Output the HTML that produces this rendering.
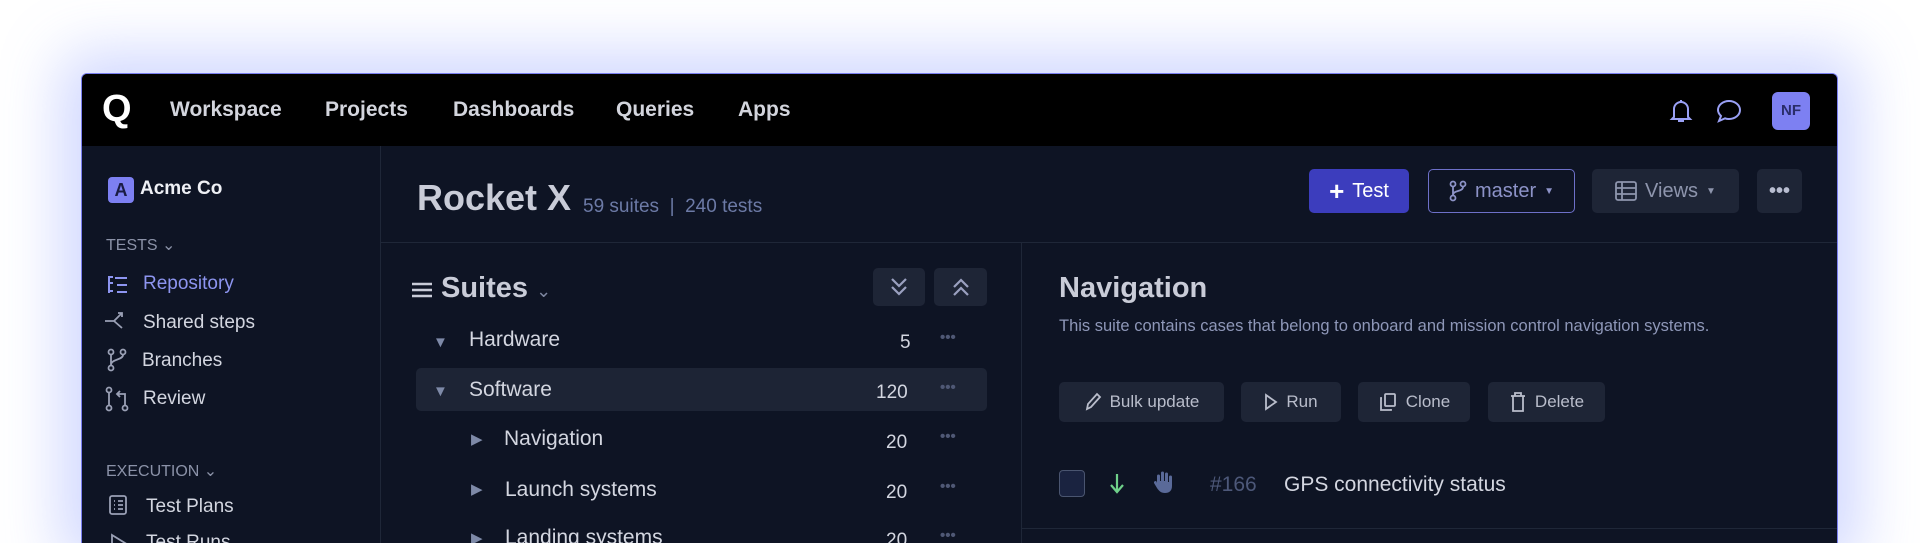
<!DOCTYPE html>
<html><head><meta charset="utf-8"><style>
*{box-sizing:border-box;margin:0;padding:0}
html{width:1920px;height:543px;overflow:hidden}
body{width:1920px;height:543px;overflow:hidden;background:#fff;font-family:"Liberation Sans",sans-serif;position:relative}
.win{position:absolute;left:81px;top:73px;width:1757px;height:470px;background:#0e1424;border:1.5px solid #7a7ff0;border-bottom:none;border-radius:6px 6px 0 0;overflow:hidden;box-shadow:0 0 60px 20px rgba(120,140,255,.35)}
.a{position:absolute;white-space:nowrap}
.nav{position:absolute;left:0;top:0;right:0;height:72px;background:#000}
.nav .a{color:#d3d5dd;font-size:21px;font-weight:bold;top:24px}
.side .a{color:#d3d6e0;font-size:19px}
.sec{color:#8b92a8 !important;font-size:16px !important}
.line{position:absolute;background:#1f2738}
.btn{position:absolute;border-radius:5px;background:#1e2536;color:#b9bdcb;font-size:17px;display:flex;align-items:center;justify-content:center;gap:8px}
.row .a{color:#d3d6e0;font-size:21px}
.row .cnt{color:#d3d6e0;font-size:19px}
.row .dots{color:#4f5875;font-size:15px;font-weight:bold}
.row .tri{color:#7e8aa8;font-size:15px}
svg{display:block}
</style></head><body>
<div class="win">
 <div class="nav">
  <div class="a" style="left:20px;top:14px;font-size:38px;font-weight:900;color:#fff">Q</div>
  <div class="a" style="left:88px">Workspace</div>
  <div class="a" style="left:243px">Projects</div>
  <div class="a" style="left:371px">Dashboards</div>
  <div class="a" style="left:534px">Queries</div>
  <div class="a" style="left:656px">Apps</div>
  <svg class="a" style="left:1587px;top:24px" width="24" height="26" viewBox="0 0 24 26" fill="none" stroke="#9aa0f5" stroke-width="2"><path d="M5 19V11a7 7 0 0 1 14 0v8l2 2H3z"/><path d="M12 2v2M9 23h6"/></svg>
  <svg class="a" style="left:1634px;top:25px" width="26" height="24" viewBox="0 0 26 24" fill="none" stroke="#9aa0f5" stroke-width="2"><path d="M13 2c6 0 11 4 11 9s-5 9-11 9c-2 0-3-.3-4-.7L3 22l2-5c-2-2-3-4-3-6 0-5 5-9 11-9z"/></svg>
  <div class="a" style="left:1690px;top:18px;width:38px;height:38px;background:#7d80f2;border-radius:6px;color:#2a2d6a;font-size:15px;font-weight:bold;text-align:center;line-height:38px">NF</div>
 </div>
 <div class="line" style="left:298px;top:72px;width:1px;height:460px"></div>
 <div class="side">
  <div class="a" style="left:26px;top:103px;width:26px;height:26px;background:#7d80f2;border-radius:4px;color:#1a1c44;font-size:18px;font-weight:bold;text-align:center;line-height:26px">A</div>
  <div class="a" style="left:58px;top:104px;font-weight:bold;font-size:19px;color:#eef0f5">Acme Co</div>
  <div class="a sec" style="left:24px;top:161px">TESTS &#8964;</div>
  <svg class="a" style="left:24px;top:200px" width="24" height="22" viewBox="0 0 24 22" fill="none" stroke="#8d95f0" stroke-width="2"><path d="M3 2v17M3 9h4M3 17h4M9 4h12M11 11h10M11 18h10M3 3h4"/></svg>
  <div class="a" style="left:61px;top:199px;color:#8d95f0">Repository</div>
  <svg class="a" style="left:22px;top:236px" width="24" height="22" viewBox="0 0 24 22" fill="none" stroke="#9aa0b5" stroke-width="1.8"><path d="M1 11h9l8-8M14 3h4v4M10 11l8 7"/></svg>
  <div class="a" style="left:61px;top:238px">Shared steps</div>
  <svg class="a" style="left:24px;top:274px" width="22" height="24" viewBox="0 0 22 24" fill="none" stroke="#9aa0b5" stroke-width="1.8"><circle cx="5" cy="4" r="2.5"/><circle cx="17" cy="4" r="2.5"/><circle cx="5" cy="20" r="2.5"/><path d="M5 7v10M17 7c0 5-12 4-12 10"/></svg>
  <div class="a" style="left:60px;top:276px">Branches</div>
  <svg class="a" style="left:23px;top:312px" width="24" height="26" viewBox="0 0 24 26" fill="none" stroke="#9aa0b5" stroke-width="1.8"><circle cx="4" cy="4" r="2.5"/><circle cx="4" cy="22" r="2.5"/><circle cx="20" cy="22" r="2.5"/><path d="M4 7v12M20 19V8h-8M15 5l-3 3 3 3"/></svg>
  <div class="a" style="left:61px;top:314px">Review</div>
  <div class="a sec" style="left:24px;top:387px">EXECUTION &#8964;</div>
  <svg class="a" style="left:26px;top:420px" width="20" height="22" viewBox="0 0 20 22" fill="none" stroke="#9aa0b5" stroke-width="1.8"><rect x="2" y="2" width="16" height="18" rx="2"/><path d="M6 7h1M10 7h5M6 11h1M10 11h5M6 15h1M10 15h5"/></svg>
  <div class="a" style="left:64px;top:422px">Test Plans</div>
  <svg class="a" style="left:26px;top:458px" width="20" height="22" viewBox="0 0 20 22" fill="none" stroke="#9aa0b5" stroke-width="1.8"><path d="M4 3l13 8-13 8z"/></svg>
  <div class="a" style="left:64px;top:458px">Test Runs</div>
 </div>
 <div class="a" style="left:335px;top:103px;font-size:36px;font-weight:bold;color:#c9ccd8">Rocket X</div>
 <div class="a" style="left:501px;top:122px;font-size:19px;color:#6c7aa6">59 suites &nbsp;| &nbsp;240 tests</div>
 <div class="btn" style="left:1227px;top:95px;width:100px;height:44px;background:#3c3dbd;color:#fff;font-size:20px"><span style="font-size:26px;font-weight:bold">+</span> Test</div>
 <div class="btn" style="left:1346px;top:95px;width:147px;height:44px;background:transparent;border:1.5px solid #6d70c8;color:#8d93c8;font-size:20px"><svg width="18" height="22" viewBox="0 0 18 22" fill="none" stroke="#8d93c8" stroke-width="1.8"><circle cx="4" cy="4" r="2.5"/><circle cx="14" cy="4" r="2.5"/><circle cx="4" cy="18" r="2.5"/><path d="M4 7v8M14 7c0 5-10 3-10 8"/></svg>master <span style="font-size:10px">&#9660;</span></div>
 <div class="btn" style="left:1510px;top:95px;width:147px;height:44px;font-size:20px;color:#8e95ad"><svg width="22" height="20" viewBox="0 0 22 20" fill="none" stroke="#8e95ad" stroke-width="1.8"><rect x="1" y="1" width="20" height="18" rx="2"/><path d="M1 7h20M1 13h20M7 1v18"/></svg>Views <span style="font-size:10px">&#9660;</span></div>
 <div class="btn" style="left:1675px;top:95px;width:45px;height:44px;font-size:20px;color:#b8bdd0;font-weight:bold">&bull;&bull;&bull;</div>
 <div class="line" style="left:299px;top:168px;width:1460px;height:1px"></div>
 <div class="line" style="left:939px;top:168px;width:1px;height:360px"></div>
 <svg class="a" style="left:329px;top:207px" width="22" height="18" viewBox="0 0 22 18" stroke="#c9ccd8" stroke-width="2.6"><path d="M1 3h20M1 9h20M1 15h20"/></svg>
 <div class="a" style="left:359px;top:198px;font-size:29px;font-weight:bold;color:#c9ccd8">Suites <span style="font-size:18px;color:#7d86a0;font-weight:normal">&#8964;</span></div>
 <div class="btn" style="left:791px;top:194px;width:52px;height:38px"><svg width="20" height="22" viewBox="0 0 20 22" fill="none" stroke="#9aa0c0" stroke-width="2.2"><path d="M3 3l7 7 7-7M3 11l7 7 7-7"/></svg></div>
 <div class="btn" style="left:852px;top:194px;width:53px;height:38px"><svg width="20" height="22" viewBox="0 0 20 22" fill="none" stroke="#9aa0c0" stroke-width="2.2"><path d="M3 11l7-7 7 7M3 19l7-7 7 7"/></svg></div>
 <div class="a" style="left:334px;top:294px;width:571px;height:43px;background:#1d2435;border-radius:5px"></div>
 <div class="row">
  <div class="a tri" style="left:351px;top:260px">&#9660;</div><div class="a" style="left:387px;top:254px">Hardware</div><div class="a cnt" style="left:818px;top:258px">5</div><div class="a dots" style="left:858px;top:255px">&bull;&bull;&bull;</div>
  <div class="a tri" style="left:351px;top:309px">&#9660;</div><div class="a" style="left:387px;top:304px">Software</div><div class="a cnt" style="left:794px;top:308px">120</div><div class="a dots" style="left:858px;top:305px">&bull;&bull;&bull;</div>
  <div class="a tri" style="left:389px;top:356px">&#9654;</div><div class="a" style="left:422px;top:353px">Navigation</div><div class="a cnt" style="left:804px;top:358px">20</div><div class="a dots" style="left:858px;top:354px">&bull;&bull;&bull;</div>
  <div class="a tri" style="left:389px;top:406px">&#9654;</div><div class="a" style="left:423px;top:404px">Launch systems</div><div class="a cnt" style="left:804px;top:408px">20</div><div class="a dots" style="left:858px;top:404px">&bull;&bull;&bull;</div>
  <div class="a tri" style="left:389px;top:455px">&#9654;</div><div class="a" style="left:423px;top:452px">Landing systems</div><div class="a cnt" style="left:804px;top:456px">20</div><div class="a dots" style="left:858px;top:453px">&bull;&bull;&bull;</div>
 </div>
 <div class="a" style="left:977px;top:198px;font-size:29px;font-weight:bold;color:#c9ccd8">Navigation</div>
 <div class="a" style="left:977px;top:243px;font-size:16.5px;color:#8e97b8">This suite contains cases that belong to onboard and mission control navigation systems.</div>
 <div class="btn" style="left:977px;top:308px;width:165px;height:40px"><svg width="18" height="20" viewBox="0 0 18 20" fill="none" stroke="#b9bdcb" stroke-width="1.8"><path d="M3 17l1-5L13 2l3 3-9 10z"/></svg>Bulk update</div>
 <div class="btn" style="left:1159px;top:308px;width:100px;height:40px"><svg width="14" height="18" viewBox="0 0 14 18" fill="none" stroke="#b9bdcb" stroke-width="1.8"><path d="M2 2l10 7-10 7z"/></svg>Run</div>
 <div class="btn" style="left:1276px;top:308px;width:112px;height:40px"><svg width="20" height="20" viewBox="0 0 20 20" fill="none" stroke="#b9bdcb" stroke-width="1.8"><rect x="7" y="2" width="10" height="12" rx="1"/><path d="M4 6H3v12h10v-1"/></svg>Clone</div>
 <div class="btn" style="left:1406px;top:308px;width:117px;height:40px"><svg width="18" height="22" viewBox="0 0 18 22" fill="none" stroke="#b9bdcb" stroke-width="1.8"><path d="M2 5h14M6 5V2h6v3M4 5v15h10V5"/></svg>Delete</div>
 <div class="a" style="left:977px;top:396px;width:26px;height:27px;border:1.5px solid #4a5570;background:#1a2340;border-radius:4px"></div>
 <svg class="a" style="left:1026px;top:398px" width="18" height="22" viewBox="0 0 18 22" fill="none" stroke="#6fd08a" stroke-width="2.2"><path d="M9 2v18M3 13l6 7 6-7"/></svg>
 <svg class="a" style="left:1069px;top:396px" width="22" height="24" viewBox="0 0 22 24" fill="#5a6a99"><path d="M6 6a1.5 1.5 0 0 1 3 0v5h1V3a1.5 1.5 0 0 1 3 0v8h1V4a1.5 1.5 0 0 1 3 0v8h1V7a1.5 1.5 0 0 1 3 0v9c0 5-3 7-7 7s-6-2-8-5l-3-5a1.5 1.5 0 0 1 2.5-1.5L6 13z"/></svg>
 <div class="a" style="left:1128px;top:399px;font-size:21px;color:#4d5879">#166</div>
 <div class="a" style="left:1202px;top:399px;font-size:21px;color:#d3d6e0">GPS connectivity status</div>
 <div class="line" style="left:940px;top:454px;width:820px;height:1px"></div>
</div>
</body></html>
